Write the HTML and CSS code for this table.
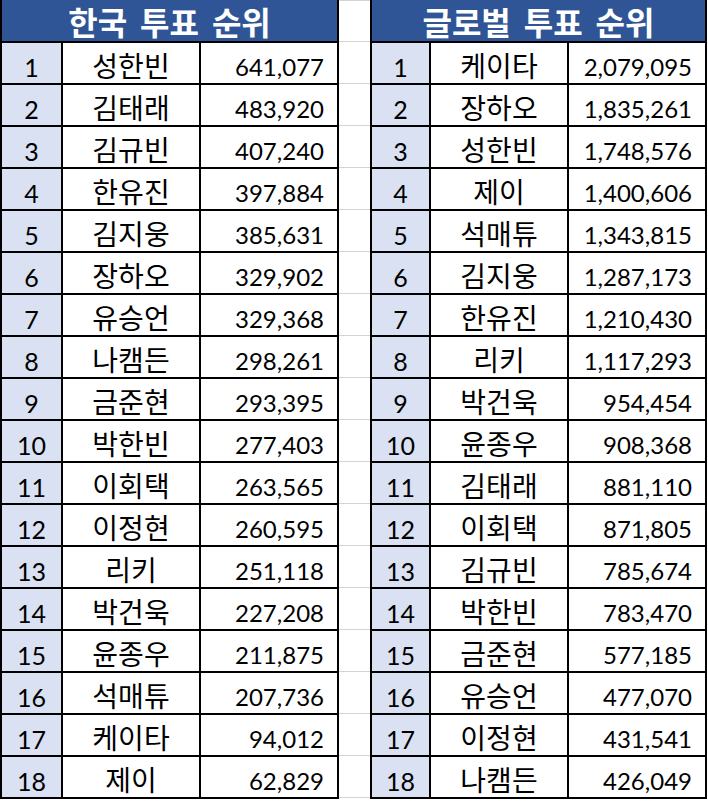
FILE: index.html
```html
<!DOCTYPE html>
<html lang="ko">
<head>
<meta charset="utf-8">
<title>투표 순위</title>
<link rel="stylesheet" href="styles.css">
</head>
<body>
<div class="sheet">
  <div class="board left">
    <div class="head">한국 투표 순위</div>
    <div class="rank">1</div><div class="name">성한빈</div><div class="num">641,077</div>
    <div class="rank">2</div><div class="name">김태래</div><div class="num">483,920</div>
    <div class="rank">3</div><div class="name">김규빈</div><div class="num">407,240</div>
    <div class="rank">4</div><div class="name">한유진</div><div class="num">397,884</div>
    <div class="rank">5</div><div class="name">김지웅</div><div class="num">385,631</div>
    <div class="rank">6</div><div class="name">장하오</div><div class="num">329,902</div>
    <div class="rank">7</div><div class="name">유승언</div><div class="num">329,368</div>
    <div class="rank">8</div><div class="name">나캠든</div><div class="num">298,261</div>
    <div class="rank">9</div><div class="name">금준현</div><div class="num">293,395</div>
    <div class="rank">10</div><div class="name">박한빈</div><div class="num">277,403</div>
    <div class="rank">11</div><div class="name">이회택</div><div class="num">263,565</div>
    <div class="rank">12</div><div class="name">이정현</div><div class="num">260,595</div>
    <div class="rank">13</div><div class="name">리키</div><div class="num">251,118</div>
    <div class="rank">14</div><div class="name">박건욱</div><div class="num">227,208</div>
    <div class="rank">15</div><div class="name">윤종우</div><div class="num">211,875</div>
    <div class="rank">16</div><div class="name">석매튜</div><div class="num">207,736</div>
    <div class="rank">17</div><div class="name">케이타</div><div class="num">94,012</div>
    <div class="rank">18</div><div class="name">제이</div><div class="num">62,829</div>
  </div>
  <div class="gap"></div>
  <div class="board right">
    <div class="head">글로벌 투표 순위</div>
    <div class="rank">1</div><div class="name">케이타</div><div class="num">2,079,095</div>
    <div class="rank">2</div><div class="name">장하오</div><div class="num">1,835,261</div>
    <div class="rank">3</div><div class="name">성한빈</div><div class="num">1,748,576</div>
    <div class="rank">4</div><div class="name">제이</div><div class="num">1,400,606</div>
    <div class="rank">5</div><div class="name">석매튜</div><div class="num">1,343,815</div>
    <div class="rank">6</div><div class="name">김지웅</div><div class="num">1,287,173</div>
    <div class="rank">7</div><div class="name">한유진</div><div class="num">1,210,430</div>
    <div class="rank">8</div><div class="name">리키</div><div class="num">1,117,293</div>
    <div class="rank">9</div><div class="name">박건욱</div><div class="num">954,454</div>
    <div class="rank">10</div><div class="name">윤종우</div><div class="num">908,368</div>
    <div class="rank">11</div><div class="name">김태래</div><div class="num">881,110</div>
    <div class="rank">12</div><div class="name">이회택</div><div class="num">871,805</div>
    <div class="rank">13</div><div class="name">김규빈</div><div class="num">785,674</div>
    <div class="rank">14</div><div class="name">박한빈</div><div class="num">783,470</div>
    <div class="rank">15</div><div class="name">금준현</div><div class="num">577,185</div>
    <div class="rank">16</div><div class="name">유승언</div><div class="num">477,070</div>
    <div class="rank">17</div><div class="name">이정현</div><div class="num">431,541</div>
    <div class="rank">18</div><div class="name">나캠든</div><div class="num">426,049</div>
  </div>
</div>
</body>
</html>
```
FILE: styles.css
```css
html, body {
  margin: 0;
  padding: 0;
  background: #ffffff;
}
.sheet {
  display: flex;
  align-items: flex-start;
  width: 708px;
  height: 801px;
  background: #ffffff;
}
.board {
  display: grid;
  grid-template-rows: 41px repeat(18, 40px);
  gap: 2px;
  padding: 0 2px 2px 2px;
  background: #000000;
}
.left {
  grid-template-columns: 59px 136px 136px;
}
.right {
  grid-template-columns: 57px 136px 136px;
}
.gap {
  width: 31px;
  height: 801px;
  background:
    linear-gradient(to bottom, #d4d4d4 0 1px, transparent 1px),
    repeating-linear-gradient(to bottom, transparent 0 41px, #d4d4d4 41px 43px, transparent 43px 42px);
  background-size: 100% 100%, 100% 42px;
  background-repeat: no-repeat, repeat-y;
}
.head {
  grid-column: 1 / 4;
  background: #2f5597;
  color: #ffffff;
  font-family: "Noto Sans CJK KR", "Noto Sans", sans-serif;
  font-weight: 700;
  font-size: 32px;
  word-spacing: 4px;
  display: flex;
  align-items: center;
  justify-content: center;
  line-height: 38px;
  white-space: nowrap;
}
.rank, .name, .num {
  display: flex;
  align-items: center;
  color: #000000;
  line-height: 1;
}
.rank {
  background: #d9e1f2;
  justify-content: center;
  font-family: "Lato", "Open Sans", sans-serif;
  font-size: 25px;
  padding-top: 8px;
}
.name {
  background: #ffffff;
  justify-content: center;
  font-family: "Noto Sans CJK KR", "Noto Sans", sans-serif;
  font-size: 28px;
  padding-top: 3px;
}
.num {
  background: #ffffff;
  justify-content: flex-end;
  font-family: "Lato", "Open Sans", sans-serif;
  font-size: 24px;
  padding-right: 13px;
  padding-top: 8px;
}
```
